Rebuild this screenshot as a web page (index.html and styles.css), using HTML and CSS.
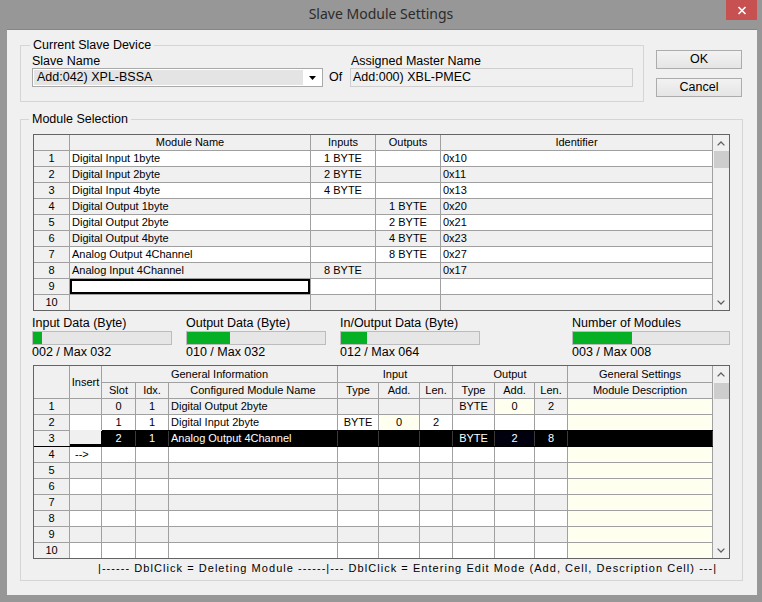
FILE: index.html
```html
<!DOCTYPE html>
<html>
<head>
<meta charset="utf-8">
<title>Slave Module Settings</title>
<link rel="stylesheet" href="styles.css">
</head>
<body>
<div class="window">
  <div class="titlebar">
    <div class="title">Slave Module Settings</div>
    <div class="close"><svg width="10" height="9" viewBox="0 0 10 9"><path d="M1.5 1 L8.5 8 M8.5 1 L1.5 8" stroke="#fff" stroke-width="1.7" fill="none"/></svg></div>
  </div>
  <div class="client">
    <div class="top-row">
      <fieldset class="group device">
        <legend>Current Slave Device</legend>
        <div class="device-grid">
          <div class="lbl">Slave Name</div>
          <div></div>
          <div class="lbl lbl-master">Assigned Master Name</div>
          <div class="combo">
            <div class="combo-field">Add:042) XPL-BSSA</div>
            <div class="combo-btn"><svg width="7" height="4" viewBox="0 0 7 4"><path d="M0 0 H7 L3.5 4 Z" fill="#000"/></svg></div>
          </div>
          <div class="of">Of</div>
          <div class="textbox">Add:000) XBL-PMEC</div>
        </div>
      </fieldset>
      <div class="buttons">
        <button class="btn">OK</button>
        <button class="btn">Cancel</button>
      </div>
    </div>

    <fieldset class="group modsel">
      <legend>Module Selection</legend>

      <div class="grid gt">
        <div class="rows">
          <div class="row hdrow"><div class="c hd"></div><div class="c hd">Module Name</div><div class="c hd">Inputs</div><div class="c hd">Outputs</div><div class="c hd">Identifier</div></div>
          <div class="row"><div class="c num">1</div><div class="c">Digital Input 1byte</div><div class="c ctr">1 BYTE</div><div class="c ctr"></div><div class="c">0x10</div></div>
          <div class="row alt"><div class="c num">2</div><div class="c">Digital Input 2byte</div><div class="c ctr">2 BYTE</div><div class="c ctr"></div><div class="c">0x11</div></div>
          <div class="row"><div class="c num">3</div><div class="c">Digital Input 4byte</div><div class="c ctr">4 BYTE</div><div class="c ctr"></div><div class="c">0x13</div></div>
          <div class="row alt"><div class="c num">4</div><div class="c">Digital Output 1byte</div><div class="c ctr"></div><div class="c ctr">1 BYTE</div><div class="c">0x20</div></div>
          <div class="row"><div class="c num">5</div><div class="c">Digital Output 2byte</div><div class="c ctr"></div><div class="c ctr">2 BYTE</div><div class="c">0x21</div></div>
          <div class="row alt"><div class="c num">6</div><div class="c">Digital Output 4byte</div><div class="c ctr"></div><div class="c ctr">4 BYTE</div><div class="c">0x23</div></div>
          <div class="row"><div class="c num">7</div><div class="c">Analog Output 4Channel</div><div class="c ctr"></div><div class="c ctr">8 BYTE</div><div class="c">0x27</div></div>
          <div class="row alt"><div class="c num">8</div><div class="c">Analog Input 4Channel</div><div class="c ctr">8 BYTE</div><div class="c ctr"></div><div class="c">0x17</div></div>
          <div class="row"><div class="c num">9</div><div class="c focus"></div><div class="c"></div><div class="c"></div><div class="c"></div></div>
          <div class="row alt"><div class="c num">10</div><div class="c"></div><div class="c"></div><div class="c"></div><div class="c"></div></div>
        </div>
        <div class="vs">
          <div class="sb-btn up16"><svg width="8" height="5" viewBox="0 0 8 5"><path d="M0.6 4.4 L4 1 L7.4 4.4" fill="none" stroke="#606060" stroke-width="1.3"/></svg></div>
          <div class="thumb th17"></div>
          <div class="sb-space"></div>
          <div class="sb-btn dn"><svg width="8" height="5" viewBox="0 0 8 5"><path d="M0.6 0.6 L4 4 L7.4 0.6" fill="none" stroke="#606060" stroke-width="1.3"/></svg></div>
        </div>
      </div>

      <div class="meters">
        <div class="meter">
          <div class="m-lbl">Input Data (Byte)</div>
          <div class="bar"><div class="fill" style="width:6.25%"></div></div>
          <div class="m-val">002 / Max 032</div>
        </div>
        <div class="meter">
          <div class="m-lbl">Output Data (Byte)</div>
          <div class="bar"><div class="fill" style="width:31.25%"></div></div>
          <div class="m-val">010 / Max 032</div>
        </div>
        <div class="meter">
          <div class="m-lbl">In/Output Data (Byte)</div>
          <div class="bar"><div class="fill" style="width:18.75%"></div></div>
          <div class="m-val">012 / Max 064</div>
        </div>
        <div class="meter last">
          <div class="m-lbl">Number of Modules</div>
          <div class="bar"><div class="fill" style="width:37.5%"></div></div>
          <div class="m-val">003 / Max 008</div>
        </div>
      </div>

      <div class="grid gb">
        <div class="rows">
          <div class="bhead">
            <div class="c h-num"></div>
            <div class="c h-ins">Insert</div>
            <div class="c h-gen">General Information</div>
            <div class="c h-in">Input</div>
            <div class="c h-out">Output</div>
            <div class="c h-set">General Settings</div>
            <div class="c">Slot</div>
            <div class="c">Idx.</div>
            <div class="c">Configured Module Name</div>
            <div class="c">Type</div>
            <div class="c">Add.</div>
            <div class="c">Len.</div>
            <div class="c">Type</div>
            <div class="c">Add.</div>
            <div class="c">Len.</div>
            <div class="c">Module Description</div>
          </div>
          <div class="row alt"><div class="c num">1</div><div class="c"></div><div class="c ctr">0</div><div class="c ctr">1</div><div class="c">Digital Output 2byte</div><div class="c ctr"></div><div class="c ctr"></div><div class="c ctr"></div><div class="c ctr">BYTE</div><div class="c ctr cr">0</div><div class="c ctr">2</div><div class="c cr"></div></div>
          <div class="row"><div class="c num">2</div><div class="c"></div><div class="c ctr">1</div><div class="c ctr">1</div><div class="c">Digital Input 2byte</div><div class="c ctr">BYTE</div><div class="c ctr cr">0</div><div class="c ctr">2</div><div class="c ctr"></div><div class="c ctr"></div><div class="c ctr"></div><div class="c cr"></div></div>
          <div class="row sel"><div class="c num">3</div><div class="c ins"></div><div class="c ctr">2</div><div class="c ctr">1</div><div class="c">Analog Output 4Channel</div><div class="c ctr"></div><div class="c ctr"></div><div class="c ctr"></div><div class="c ctr">BYTE</div><div class="c ctr navy">2</div><div class="c ctr">8</div><div class="c"></div></div>
          <div class="row"><div class="c num">4</div><div class="c arrow">--&gt;</div><div class="c"></div><div class="c"></div><div class="c"></div><div class="c"></div><div class="c"></div><div class="c"></div><div class="c"></div><div class="c"></div><div class="c"></div><div class="c cr"></div></div>
          <div class="row alt"><div class="c num">5</div><div class="c"></div><div class="c"></div><div class="c"></div><div class="c"></div><div class="c"></div><div class="c"></div><div class="c"></div><div class="c"></div><div class="c"></div><div class="c"></div><div class="c cr"></div></div>
          <div class="row"><div class="c num">6</div><div class="c"></div><div class="c"></div><div class="c"></div><div class="c"></div><div class="c"></div><div class="c"></div><div class="c"></div><div class="c"></div><div class="c"></div><div class="c"></div><div class="c cr"></div></div>
          <div class="row alt"><div class="c num">7</div><div class="c"></div><div class="c"></div><div class="c"></div><div class="c"></div><div class="c"></div><div class="c"></div><div class="c"></div><div class="c"></div><div class="c"></div><div class="c"></div><div class="c cr"></div></div>
          <div class="row"><div class="c num">8</div><div class="c"></div><div class="c"></div><div class="c"></div><div class="c"></div><div class="c"></div><div class="c"></div><div class="c"></div><div class="c"></div><div class="c"></div><div class="c"></div><div class="c cr"></div></div>
          <div class="row alt"><div class="c num">9</div><div class="c"></div><div class="c"></div><div class="c"></div><div class="c"></div><div class="c"></div><div class="c"></div><div class="c"></div><div class="c"></div><div class="c"></div><div class="c"></div><div class="c cr"></div></div>
          <div class="row"><div class="c num">10</div><div class="c"></div><div class="c"></div><div class="c"></div><div class="c"></div><div class="c"></div><div class="c"></div><div class="c"></div><div class="c"></div><div class="c"></div><div class="c"></div><div class="c cr"></div></div>
        </div>
        <div class="vs">
          <div class="sb-btn up17"><svg width="8" height="5" viewBox="0 0 8 5"><path d="M0.6 4.4 L4 1 L7.4 4.4" fill="none" stroke="#606060" stroke-width="1.3"/></svg></div>
          <div class="thumb th16"></div>
          <div class="sb-space"></div>
          <div class="sb-btn dn"><svg width="8" height="5" viewBox="0 0 8 5"><path d="M0.6 0.6 L4 4 L7.4 0.6" fill="none" stroke="#606060" stroke-width="1.3"/></svg></div>
        </div>
      </div>

      <div class="hint">|------ DblClick = Deleting Module ------|--- DblClick = Entering Edit Mode (Add, Cell, Description Cell) ---|</div>
    </fieldset>
  </div>
</div>
</body>
</html>
```
FILE: styles.css
```css
* { box-sizing: border-box; }
html, body { margin: 0; padding: 0; }
body {
  width: 762px;
  height: 602px;
  overflow: hidden;
  background: #979797;
  font-family: "Liberation Sans", Arial, sans-serif;
  font-size: 12.5px;
  color: #000;
}
.window {
  width: 762px;
  height: 602px;
  display: flex;
  flex-direction: column;
}
.titlebar {
  height: 29px;
  flex: none;
  display: grid;
  grid-template-columns: 1fr auto 1fr;
  align-items: start;
}
.title {
  grid-column: 2;
  font-family: "Noto Sans", "Open Sans", sans-serif;
  font-size: 14px;
  line-height: 28px;
  color: #2b2b2b;
}
.close {
  grid-column: 3;
  justify-self: end;
  margin-right: 5px;
  width: 31px;
  height: 20px;
  background: #c75050;
  display: flex;
  align-items: center;
  justify-content: center;
}
.client {
  flex: none;
  height: 566px;
  margin: 0 5px 0 7px;
  background: #f0f0f0;
  border-top: 1px solid #858585;
  padding: 8px 0 0 13px;
}
.top-row {
  display: flex;
  align-items: flex-start;
}
.group {
  margin: 0;
  min-width: 0;
  border: 1px solid #d5d5d5;
}
.group legend {
  padding: 0 3px;
  font-size: 12.5px;
  line-height: 14px;
}
.device {
  width: 624px;
  padding: 2px 10px 14px 11px;
}
.device legend { margin-left: -2px; }
.device-grid {
  display: grid;
  grid-template-columns: 291px 27px 283px;
  grid-template-rows: 14px 19px;
}
.lbl { line-height: 14px; white-space: nowrap; }
.lbl-master { padding-left: 1px; }
.combo {
  display: flex;
  height: 19px;
  border: 1px solid #a9a9a9;
  background: #fff;
  padding: 1px;
}
.combo-field {
  flex: 1;
  background: #e4e4e4;
  line-height: 15px;
  padding-left: 3px;
  white-space: nowrap;
}
.combo-btn {
  width: 18px;
  display: flex;
  align-items: center;
  justify-content: center;
}
.of {
  line-height: 19px;
  padding-left: 6px;
}
.textbox {
  height: 19px;
  border: 1px solid #cfcfcf;
  background: #f0f0f0;
  line-height: 17px;
  padding-left: 2px;
  white-space: nowrap;
}
.buttons {
  margin-left: 12px;
  margin-top: 12px;
  display: flex;
  flex-direction: column;
  gap: 9px;
}
.btn {
  width: 86px;
  height: 19px;
  padding: 0;
  border: 1px solid #acacac;
  background: linear-gradient(#f2f2f2, #e5e5e5);
  font-family: "Liberation Sans", Arial, sans-serif;
  font-size: 12.5px;
  line-height: 17px;
  color: #000;
}
.modsel {
  width: 723px;
  margin-top: 10px;
  padding: 8px 12px 5px 12px;
}
.modsel legend { margin-left: -4px; }

/* grids */
.grid {
  display: flex;
  width: 697px;
  border: 1px solid #646464;
  background: #fff;
  font-size: 11px;
}
.gb { margin-top: 6px; }
.rows { width: 679px; flex: none; }
.row {
  display: grid;
  height: 16px;
  border-bottom: 1px solid #a0a0a0;
}
.rows > .row:last-child { border-bottom: 0; height: 15px; }
.gt .row { grid-template-columns: 36px 241px 65px 65px 272px; }
.gb .row, .bhead {
  grid-template-columns: 36px 32px 34px 33px 169px 41px 41px 33px 42px 40px 33px 145px;
}
.c {
  border-right: 1px solid #a0a0a0;
  line-height: 15px;
  padding: 0 2px;
  white-space: nowrap;
  overflow: hidden;
}
.ctr { text-align: center; }
.hd { background: #f0f0f0; text-align: center; }
.num { background: #f0f0f0; text-align: center; }
.row.alt { background: #f0f0f0; }
.cr { background: #fffff0; }
.focus { box-shadow: inset 0 0 0 2px #000; background: #fff; }
.arrow { padding-left: 5px; }

.bhead {
  display: grid;
  grid-template-rows: 17px 16px;
  background: #f0f0f0;
}
.bhead .c {
  border-bottom: 1px solid #a0a0a0;
  display: flex;
  align-items: center;
  justify-content: center;
}
.h-num { grid-row: 1 / 3; grid-column: 1; }
.h-ins { grid-row: 1 / 3; grid-column: 2; }
.h-gen { grid-row: 1; grid-column: 3 / 6; }
.h-in  { grid-row: 1; grid-column: 6 / 9; }
.h-out { grid-row: 1; grid-column: 9 / 12; }
.h-set { grid-row: 1; grid-column: 12; }

.row.sel { border-bottom-color: #000; }
.row.sel .c {
  background: #000;
  color: #fff;
  border-right-color: #3a3a3a;
  box-shadow: 0 -1px 0 #000;
}
.row.sel .c.num {
  background: #f0f0f0;
  color: #000;
  border-right-color: #a0a0a0;
  box-shadow: none;
}
.row.sel .c.ins {
  background: #f0f0f0;
  border-bottom: 2px solid #000;
  border-right-color: #000;
  box-shadow: 0 -1px 0 #f0f0f0;
}
.row.sel .c.navy { background: #00000f; }

/* scrollbars */
.vs {
  width: 16px;
  flex: none;
  display: flex;
  flex-direction: column;
  background: #f0f0f0;
}
.sb-btn {
  display: flex;
  align-items: center;
  justify-content: center;
}
.up16 { height: 16px; }
.up17 { height: 17px; }
.dn { height: 16px; }
.thumb { background: #cdcdcd; margin-left: 1px; }
.th17 { height: 17px; }
.th16 { height: 16px; }
.sb-space { flex: 1; }

/* meters */
.meters {
  display: grid;
  grid-template-columns: 140px 140px 140px 1fr 158px;
  column-gap: 14px;
  margin: 5px 0 0 -1px;
}
.meter.last { grid-column: 5; }
.m-lbl, .m-val { line-height: 14px; white-space: nowrap; }
.bar {
  height: 14px;
  margin-top: 1px;
  border: 1px solid #bcbcbc;
  background: #e6e6e6;
}
.fill { height: 100%; background: #06b025; }

.hint {
  margin-top: 2px;
  padding-left: 65px;
  font-size: 11px;
  letter-spacing: 1.05px;
  line-height: 14px;
  white-space: pre;
}
```
